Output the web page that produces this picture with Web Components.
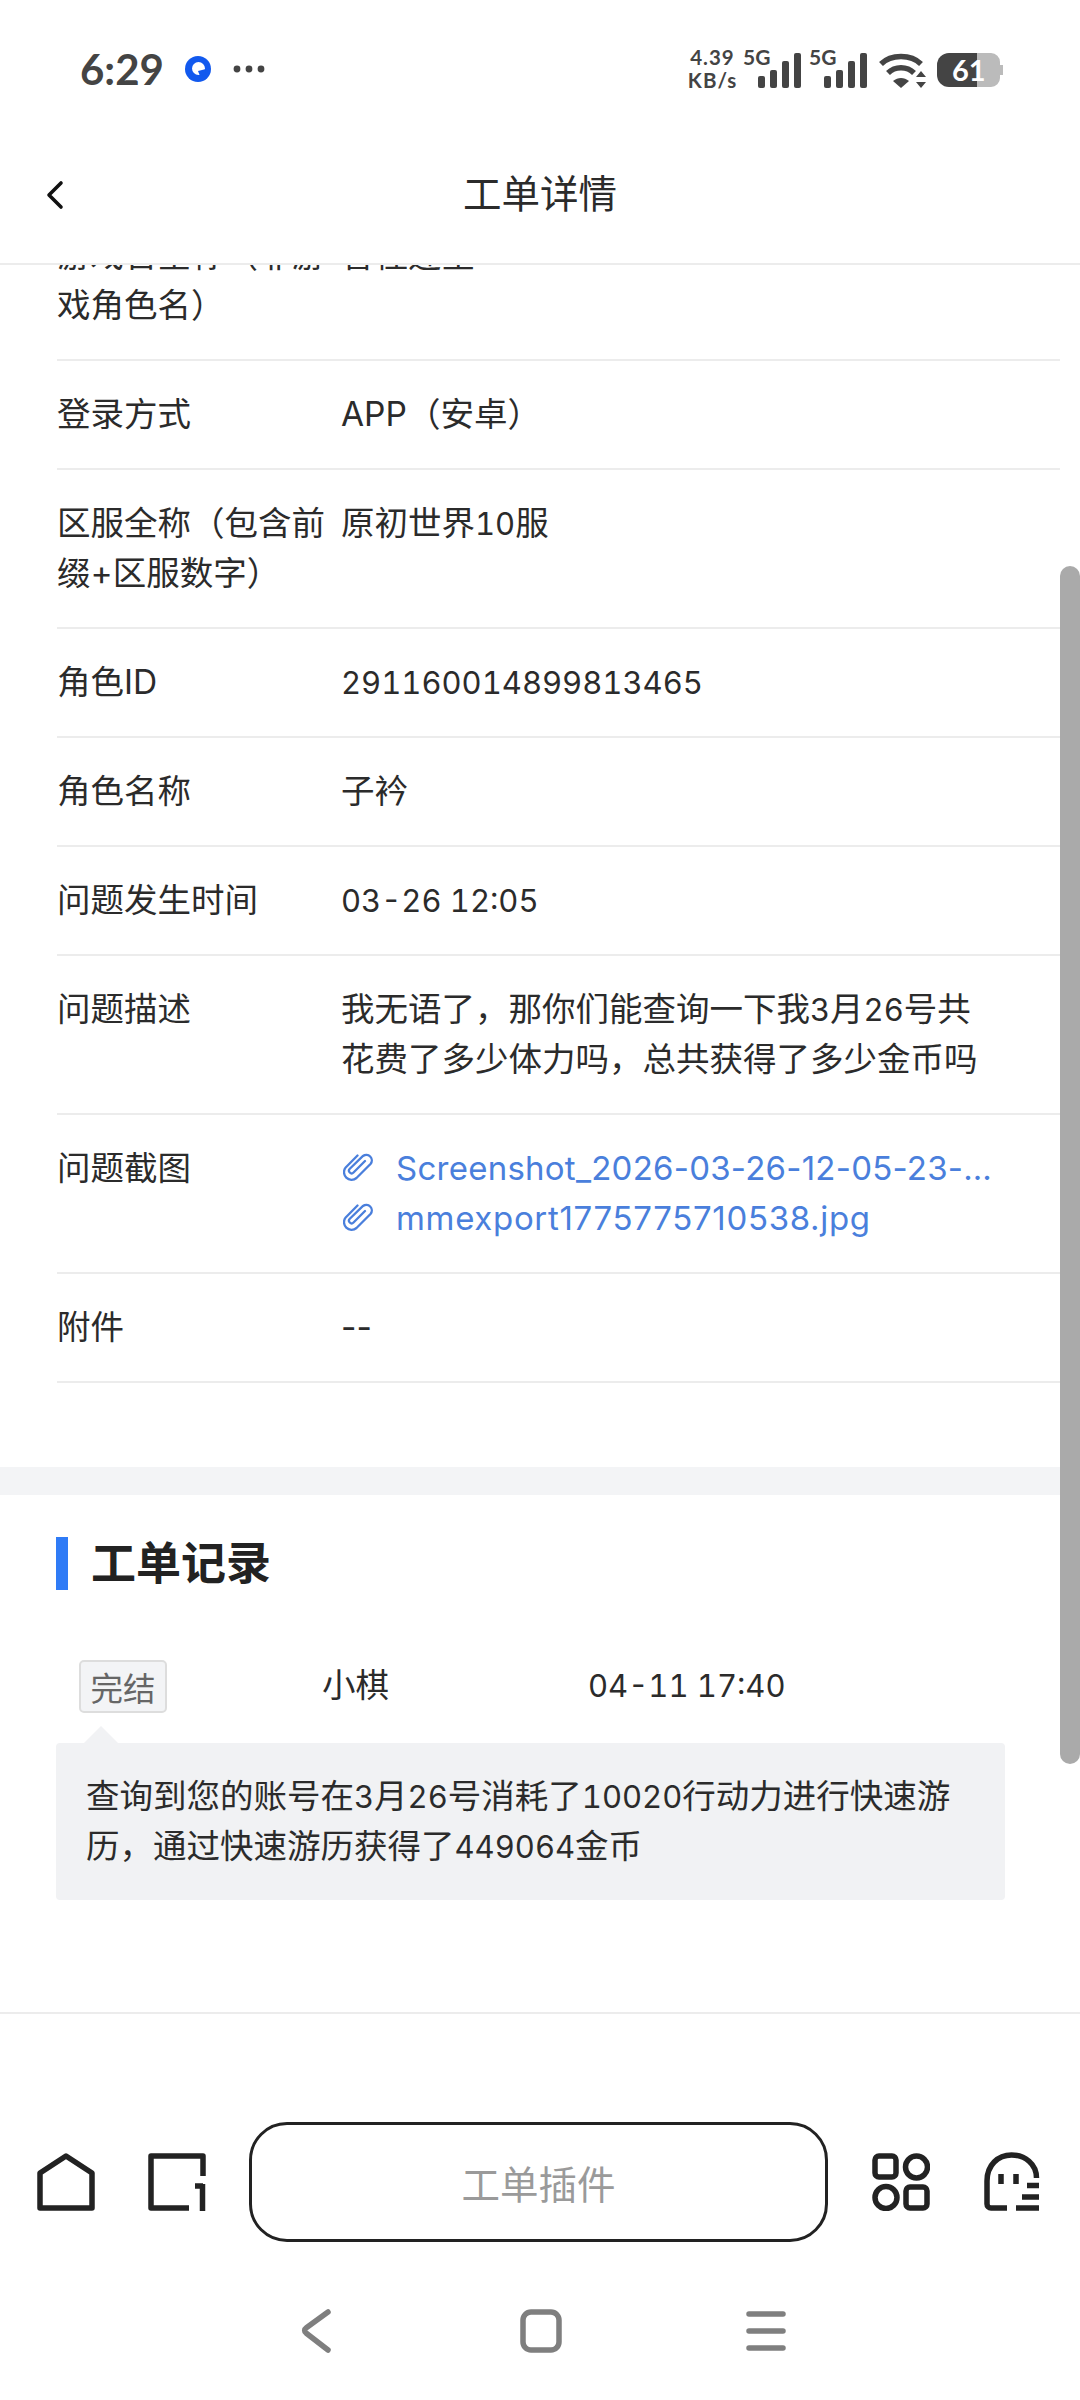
<!DOCTYPE html>
<html lang="zh"><head><meta charset="utf-8">
<style>
html,body{margin:0;padding:0;background:#fff}
body{width:1080px;height:2400px;overflow:hidden;font-family:Inter,"Noto Sans CJK SC",sans-serif;color:#2b2b2b;display:flex;flex-direction:column}
</style></head><body>
<status-bar></status-bar>
<nav-header>工单详情</nav-header>
<detail-view>
  <info-row label="游戏官全称（非游戏角色名）" value="香桂迎星"></info-row>
  <info-row label="登录方式" value="APP（安卓）"></info-row>
  <info-row label="区服全称（包含前缀+区服数字）" value="原初世界10服"></info-row>
  <info-row label="角色ID" value="291160014899813465"></info-row>
  <info-row label="角色名称" value="子衿"></info-row>
  <info-row label="问题发生时间" value="03-26 12:05"></info-row>
  <info-row label="问题描述" value="我无语了，那你们能查询一下我3月26号共|花费了多少体力吗，总共获得了多少金币吗"></info-row>
  <info-row label="问题截图"><file-link style="letter-spacing:.25px">Screenshot_2026-03-26-12-05-23-…</file-link><file-link style="letter-spacing:.67px">mmexport1775775710538.jpg</file-link></info-row>
  <info-row label="附件" value="--"></info-row>
  <record-section slot="after"></record-section>
</detail-view>
<bottom-bar></bottom-bar>
<system-nav></system-nav>
<script>
function def(name, css, html){
  customElements.define(name, class extends HTMLElement{
    connectedCallback(){
      if(this.shadowRoot) return;
      const r=this.attachShadow({mode:'open'});
      r.innerHTML='<style>'+css+'</style>'+(typeof html==='function'?html(this):html);
    }
  });
}
const num=s=>s.replace(/[0-9][0-9:\- ]*[0-9]|[0-9]/g,m=>'<span class="n">'+m+'</span>').replace('|','<wbr>');
const nCss='.n{font-variant-numeric:tabular-nums;font-size:31px;line-height:1}';
const bars='<svg width="43" height="35" viewBox="0 0 43 35"><rect x="0" y="23" width="7" height="12" rx="2" fill="#444"/><rect x="12" y="17" width="7" height="18" rx="2" fill="#444"/><rect x="24" y="8" width="7" height="27" rx="2" fill="#444"/><rect x="36" y="0" width="7" height="35" rx="2" fill="#444"/></svg>';
def('status-bar',`
:host{display:flex;align-items:center;height:138px;flex:none;padding:0 77px 0 80px;box-sizing:border-box;color:#444;font-family:"Lato","Noto Sans",sans-serif}
.t{font-size:42px;font-weight:700;line-height:46px}
.dot{margin-left:21px;width:26px;height:26px;display:block}
.more{margin-left:22px;display:block}
.sp{flex:1}
.net{font:700 20.5px/23px "Lato","Noto Sans",sans-serif;letter-spacing:1px;text-align:center;width:45px;white-space:nowrap;margin-top:0;display:flex;flex-direction:column;align-items:center}
.sig{position:relative;width:43px;height:35px;margin-left:23px;margin-top:2px}
.sig span{position:absolute;left:-15px;top:-6px;font:700 21px/20px "Lato","Noto Sans",sans-serif}
svg{display:block;flex:none}
.bat{position:relative;width:66px;height:34px;margin-left:10px;margin-top:2px}
.bat b{position:absolute;left:15px;top:0;font:700 29px/34px "Lato",sans-serif;color:#fff}
`,`<span class="t">6:29</span>
<svg class="dot" viewBox="0 0 26 26"><circle cx="13" cy="13" r="13" fill="#1259ee"/><circle cx="13.500" cy="12.500" r="6.500" fill="#fff"/><path d="M13 15l8-2-1 5-5 2z" fill="#1259ee"/></svg>
<svg class="more" width="32" height="8" viewBox="0 0 32 8"><circle cx="4" cy="4" r="3.400" fill="#444"/><circle cx="16" cy="4" r="3.400" fill="#444"/><circle cx="28" cy="4" r="3.400" fill="#444"/></svg>
<span class="sp"></span>
<span class="net"><span>4.39</span><span>KB/s</span></span>
<span class="sig"><span>5G</span>${bars}</span>
<span class="sig"><span>5G</span>${bars}</span>
<svg width="48" height="35" viewBox="0 0 48 35" style="margin-left:12px;margin-top:2px"><path d="M2 11C12 1 32 1 42 11" fill="none" stroke="#444" stroke-width="5.500"/><path d="M9 20C16 13 28 13 35 20" fill="none" stroke="#444" stroke-width="5.500"/><path d="M14 28C19 24 25 24 30 28L22 35Z" fill="#444"/><path d="M42 18l5 6H37ZM42 35l5-6H37Z" fill="#444"/></svg>
<span class="bat"><svg width="66" height="34" viewBox="0 0 66 34"><path d="M40 0h14a9 9 0 0 1 9 9v3h3v10h-3v3a9 9 0 0 1-9 9H40Z" fill="#bbb"/><path d="M12 0h28v34H12A12 12 0 0 1 0 22V12A12 12 0 0 1 12 0Z" fill="#444"/></svg><b>61</b></span>
`);
def('nav-header',`
:host{display:flex;align-items:center;justify-content:center;position:relative;flex:none;height:127px;border-bottom:2px solid #ececec;box-sizing:border-box;font:38.5px "Noto Sans CJK SC",sans-serif;color:#2b2b2b;padding-bottom:20px}
svg{position:absolute;left:46px;top:42px;display:block}
`,`<svg width="18" height="30" viewBox="0 0 18 30"><path d="M15 3 3 15l12 12" fill="none" stroke="#111" stroke-width="3.600" stroke-linecap="round" stroke-linejoin="round"/></svg><slot></slot>`);
def('detail-view',`
:host{display:block;position:relative;flex:none;height:1747px;overflow:hidden}
.in{margin-top:-63px}
.rows{padding-left:57px;padding-bottom:84px}
.bar{position:absolute;right:0;top:301px;width:20px;height:1198px;background:#aaa;border-radius:10px}
`,`<div class="in"><div class="rows"><slot></slot></div><slot name="after"></slot></div><div class="bar"></div>`);
def('info-row',`
:host{display:grid;grid-template-columns:284px 1fr;box-sizing:border-box;padding:28px 0 29px;border-bottom:2px solid #ececec;width:1003px;font-size:33.500px;line-height:50px;color:#2b2b2b}
.l{padding-right:13px}
.v{padding-right:70px}
${nCss}
`,el=>`<div class="l">${el.getAttribute('label')}</div><div class="v">${num(el.getAttribute('value')||'')}<slot></slot></div>`);
def('file-link',`
:host{display:flex;align-items:center;color:#4a7fdc;white-space:nowrap;height:50px;font-size:33px}
svg{display:block;flex:none;margin-right:23px;margin-left:2px}
`,`<svg width="30" height="32" viewBox="0 0 30 32"><path d="M22 9 10.500 20.500a2.600 2.600 0 0 1-3.700-3.700L20 4a5.500 5.500 0 0 1 7.700 7.700L13.500 26a7.600 7.600 0 0 1-10.800-10.600L14.500 3.500" fill="none" stroke="#4a7fdc" stroke-width="2.300" stroke-linecap="round"/></svg><slot></slot>`);
def('record-section',`
:host{display:block;border-top:28px solid #f3f4f6;padding:42px 0 0}
.h{display:flex;align-items:center;gap:23px;font-size:45px;font-weight:700;color:#222;padding-left:56px;height:53px;line-height:53px}
.h i{display:block;width:12px;height:53px;background:#2f7bf6}
.m{display:flex;align-items:center;margin:70px 0 0 79px;height:53px;font-size:33.500px;color:#2b2b2b}
.tag{width:88px;height:53px;box-sizing:border-box;border:2px solid #ddd;border-radius:5px;background:#f3f4f6;color:#666;font-size:32.500px;display:flex;align-items:center;justify-content:center;margin-right:155px;margin-top:-1px}
.who{width:266px;margin-bottom:8px}
.date{margin-bottom:4px}
.msg{position:relative;margin:30px 0 0 56px;width:949px;box-sizing:border-box;background:#f1f2f4;border-radius:4px;font-size:33.500px;line-height:50px;padding:28px 30px 29px 30px;color:#2b2b2b}
.msg::before{content:"";position:absolute;left:28px;top:-17px;border:17px solid transparent;border-top:0;border-bottom-color:#f1f2f4}
${nCss}
`,`<div class="h"><i></i><span>工单记录</span></div>
<div class="m"><span class="tag">完结</span><span class="who">小棋</span><span class="date">${num('04-11 17:40')}</span></div>
<div class="msg">${num('查询到您的账号在3月26号消耗了10020行动力进行快速游|历，通过快速游历获得了449064金币')}</div>`);
def('bottom-bar',`
:host{display:flex;align-items:center;flex:none;border-top:2px solid #ececec;box-sizing:border-box;padding:108px 0 16px 0;height:246px}
svg{display:block;flex:none}
.b{flex:none;width:579px;height:120px;box-sizing:border-box;border:3px solid #222;border-radius:38px;display:flex;align-items:center;justify-content:center;font-size:38.500px;color:#9a9a9a;margin-left:43px}
`,`<svg style="margin-left:37px" width="58" height="58" viewBox="0 0 58 58"><path d="M29 3 55 20V55H3V20Z" fill="none" stroke="#222" stroke-width="5.500" stroke-linejoin="round"/></svg>
<svg style="margin-left:53px" width="58" height="58" viewBox="0 0 58 58"><path d="M41 55H3V3H55V23" fill="none" stroke="#222" stroke-width="5.500" stroke-linejoin="round"/><path d="M47 33H55M54.500 31V58" fill="none" stroke="#222" stroke-width="5.500"/></svg>
<span class="b">工单插件</span>
<svg style="margin-left:44px" width="58" height="58" viewBox="0 0 58 58"><rect x="3" y="3" width="21" height="21" rx="4" fill="none" stroke="#222" stroke-width="5.500"/><circle cx="44.500" cy="14" r="11" fill="none" stroke="#222" stroke-width="5.500"/><circle cx="14" cy="44.500" r="11" fill="none" stroke="#222" stroke-width="5.500"/><rect x="34" y="34" width="21" height="21" rx="4" fill="none" stroke="#222" stroke-width="5.500"/></svg>
<svg style="margin-left:54px" width="56" height="60" viewBox="0 0 56 60"><path d="M52.500 26C52.500 12 41 3 27.500 3S3 13 3 29V52a4 4 0 0 0 4 4H23" fill="none" stroke="#222" stroke-width="5.500"/><path d="M32 56H55M38 45H55M43 33.500H55M17 22v10M32 22v10" fill="none" stroke="#222" stroke-width="5.500"/></svg>`);
def('system-nav',`
:host{display:flex;flex:none;height:142px;box-sizing:border-box;align-items:flex-start}
svg{display:block;flex:none}
`,`<svg style="margin-left:300px;margin-top:50px" width="32" height="46" viewBox="0 0 32 46"><path d="M28 4 6 20a3 3 0 0 0 0 5L28 42" fill="none" stroke="#7f7f7f" stroke-width="5.500" stroke-linecap="round" stroke-linejoin="round"/></svg>
<svg style="margin-left:188px;margin-top:51px" width="42" height="44" viewBox="0 0 42 44"><rect x="3" y="3" width="36" height="38" rx="8" fill="none" stroke="#7f7f7f" stroke-width="5.500"/></svg>
<svg style="margin-left:184px;margin-top:53px" width="40" height="40" viewBox="0 0 40 40"><path d="M3 3H37M3 20H37M3 37H37" fill="none" stroke="#7f7f7f" stroke-width="5.500" stroke-linecap="round"/></svg>`);
</script>
</body></html>
